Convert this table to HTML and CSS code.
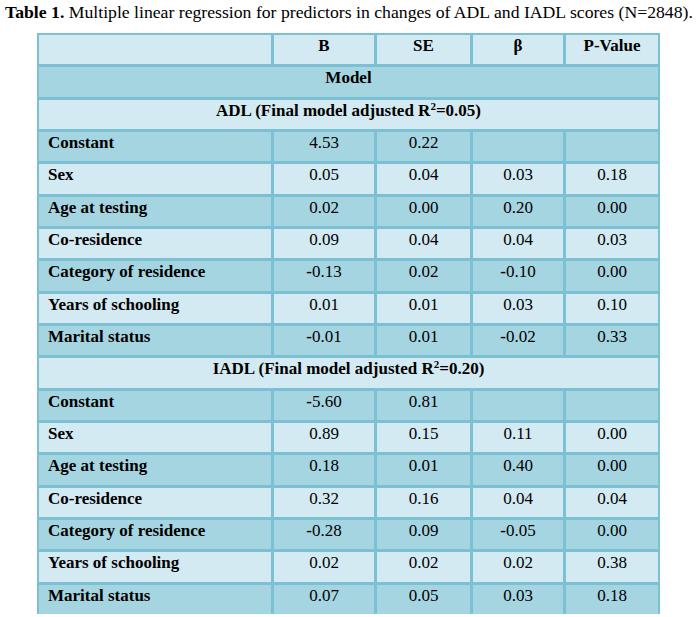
FILE: index.html
```html
<!DOCTYPE html>
<html lang="en">
<head>
<meta charset="utf-8">
<title>Table 1</title>
<link rel="stylesheet" href="styles.css">
</head>
<body>
<p class="caption"><b>Table 1.</b> Multiple linear regression for predictors in changes of ADL and IADL scores (N=2848).</p>
<div class="table">
  <div class="c light"></div><div class="c light h">B</div><div class="c light h">SE</div><div class="c light h">β</div><div class="c light h">P-Value</div>
  <div class="c dark span h">Model</div>
  <div class="c light span h">ADL (Final model adjusted R<sup>2</sup>=0.05)</div>

  <div class="c dark lbl">Constant</div><div class="c dark">4.53</div><div class="c dark">0.22</div><div class="c dark"></div><div class="c dark"></div>
  <div class="c light lbl">Sex</div><div class="c light">0.05</div><div class="c light">0.04</div><div class="c light">0.03</div><div class="c light">0.18</div>
  <div class="c dark lbl">Age at testing</div><div class="c dark">0.02</div><div class="c dark">0.00</div><div class="c dark">0.20</div><div class="c dark">0.00</div>
  <div class="c light lbl">Co-residence</div><div class="c light">0.09</div><div class="c light">0.04</div><div class="c light">0.04</div><div class="c light">0.03</div>
  <div class="c dark lbl">Category of residence</div><div class="c dark"><b>-</b>0.13</div><div class="c dark">0.02</div><div class="c dark"><b>-</b>0.10</div><div class="c dark">0.00</div>
  <div class="c light lbl">Years of schooling</div><div class="c light">0.01</div><div class="c light">0.01</div><div class="c light">0.03</div><div class="c light">0.10</div>
  <div class="c dark lbl">Marital status</div><div class="c dark"><b>-</b>0.01</div><div class="c dark">0.01</div><div class="c dark"><b>-</b>0.02</div><div class="c dark">0.33</div>

  <div class="c light span h">IADL (Final model adjusted R<sup>2</sup>=0.20)</div>

  <div class="c dark lbl">Constant</div><div class="c dark"><b>-</b>5.60</div><div class="c dark">0.81</div><div class="c dark"></div><div class="c dark"></div>
  <div class="c light lbl">Sex</div><div class="c light">0.89</div><div class="c light">0.15</div><div class="c light">0.11</div><div class="c light">0.00</div>
  <div class="c dark lbl">Age at testing</div><div class="c dark">0.18</div><div class="c dark">0.01</div><div class="c dark">0.40</div><div class="c dark">0.00</div>
  <div class="c light lbl">Co-residence</div><div class="c light">0.32</div><div class="c light">0.16</div><div class="c light">0.04</div><div class="c light">0.04</div>
  <div class="c dark lbl">Category of residence</div><div class="c dark"><b>-</b>0.28</div><div class="c dark">0.09</div><div class="c dark"><b>-</b>0.05</div><div class="c dark">0.00</div>
  <div class="c light lbl">Years of schooling</div><div class="c light">0.02</div><div class="c light">0.02</div><div class="c light">0.02</div><div class="c light">0.38</div>
  <div class="c dark lbl">Marital status</div><div class="c dark">0.07</div><div class="c dark">0.05</div><div class="c dark">0.03</div><div class="c dark">0.18</div>
</div>
</body>
</html>
```
FILE: styles.css
```css
html, body {
  margin: 0;
  padding: 0;
  background: #ffffff;
}
body {
  font-family: "Liberation Serif", "Times New Roman", serif;
  font-size: 17px;
  color: #000;
  overflow: hidden;
}
.caption {
  margin: 0;
  padding: 2px 0 0 5px;
  height: 31px;
  font-size: 17.7px;
  line-height: normal;
  white-space: nowrap;
}
.table {
  margin-left: 37px;
  display: grid;
  grid-template-columns: 232px 100px 93px 90px 92px;
  grid-auto-rows: 29.33px;
  gap: 3px;
  width: max-content;
  background: #7cc0d4;
  border: 2px solid #7cc0d4;
  border-bottom: 0;
}
.c {
  padding: 1px 4px 0;
  line-height: 20px;
  text-align: center;
  overflow: hidden;
}
.light { background: #d3eaf2; }
.dark { background: #a6d5e2; }
.h { font-weight: bold; }
.lbl {
  text-align: left;
  font-weight: bold;
  padding-left: 9px;
}
.span { grid-column: 1 / -1; }
sup {
  font-size: 11px;
  line-height: 0;
  vertical-align: 6px;
}
```
